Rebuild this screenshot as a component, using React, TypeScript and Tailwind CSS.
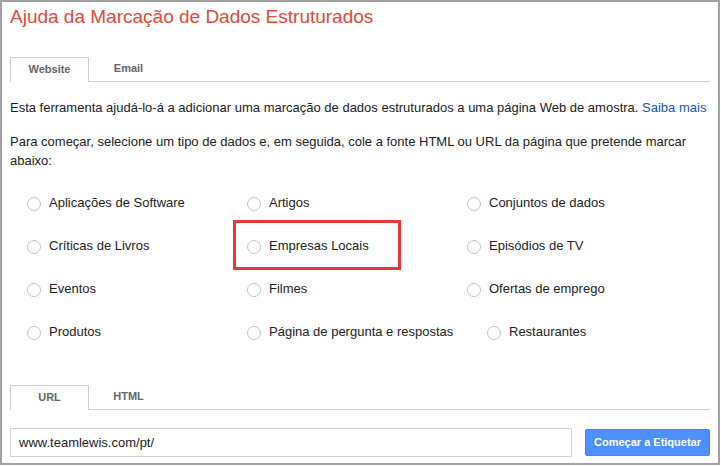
import React, { useState } from "react";

const types = [
  ["Aplicações de Software", "Artigos", "Conjuntos de dados"],
  ["Críticas de Livros", "Empresas Locais", "Episódios de TV"],
  ["Eventos", "Filmes", "Ofertas de emprego"],
  ["Produtos", "Página de pergunta e respostas", "Restaurantes"],
];

const Tabs: React.FC<{ tabs: string[]; active: string; onChange: (t: string) => void; className?: string }> = ({
  tabs,
  active,
  onChange,
  className,
}) => (
  <div className={`flex items-end h-[25px] border-b border-[#cfcfcf] ${className ?? ""}`}>
    {tabs.map((t) => (
      <button
        key={t}
        onClick={() => onChange(t)}
        className={`${
          active === t ? "border border-b-0 border-[#cfcfcf] bg-white" : "border border-transparent"
        } relative -mb-px w-[79px] h-[25px] pb-[2px] flex items-center justify-center text-[11px] font-bold text-[#666]`}
      >
        {t}
      </button>
    ))}
  </div>
);

export default function App() {
  const [mode, setMode] = useState("Website");
  const [source, setSource] = useState("URL");
  const [selected, setSelected] = useState<string | null>(null);
  const [url, setUrl] = useState("www.teamlewis.com/pt/");

  return (
    <div className="w-[721px] h-[467px] bg-white" style={{ fontFamily: '"Liberation Sans", Arial, sans-serif' }}>
      <div className="relative w-[720px] h-[465px] border-2 border-[#a3a3a3] px-[8px] text-[#222]">
        <h1 className="mt-[3px] text-[19px] leading-[24px] text-[#dd4b39]">Ajuda da Marcação de Dados Estruturados</h1>

        <Tabs tabs={["Website", "Email"]} active={mode} onChange={setMode} className="mt-[28px]" />

        <p className="mt-[16px] text-[13px] leading-[19px]">
          Esta ferramenta ajudá-lo-á a adicionar uma marcação de dados estruturados a uma página Web de amostra.{" "}
          <a href="#" className="text-[#1155cc]">
            Saiba mais
          </a>
        </p>
        <p className="mt-[15px] text-[13px] leading-[19px]">
          Para começar, selecione um tipo de dados e, em seguida, cole a fonte HTML ou URL da página que pretende marcar
          abaixo:
        </p>

        <div className="mt-[11px] pl-[17px]">
          {types.map((row, i) => (
            <div key={i} className="flex h-[43px] items-center">
              {row.map((label, j) => (
                <label
                  key={label}
                  className={`flex items-center gap-[8px] text-[13px] cursor-pointer ${
                    j < 2 ? "w-[220px]" : ""
                  } ${i === 3 && j === 2 ? "ml-[20px]" : ""}`}
                >
                  <span
                    onClick={() => setSelected(label)}
                    className="mt-[3px] w-[14px] h-[14px] rounded-full border border-[#c4c4c4] bg-white flex items-center justify-center"
                  >
                    {selected === label && <span className="w-[6px] h-[6px] rounded-full bg-[#666]" />}
                  </span>
                  {label}
                </label>
              ))}
            </div>
          ))}
        </div>

        <div className="absolute left-[231px] top-[218px] w-[168px] h-[50px] border-[3px] border-[#e53935]" />

        <Tabs tabs={["URL", "HTML"]} active={source} onChange={setSource} className="mt-[32px]" />

        <div className="mt-[18px] flex items-center gap-[13px]">
          <input
            type="text"
            value={url}
            onChange={(e) => setUrl(e.target.value)}
            className="w-[562px] h-[29px] border border-[#d4d4d4] pl-[8px] text-[13px] text-[#222] outline-none"
          />
          <button className="w-[125px] h-[27px] rounded-[2px] border border-[#3f86f5] bg-[#4d90fe] text-white text-[11px] font-bold">
            Começar a Etiquetar
          </button>
        </div>
      </div>
    </div>
  );
}
